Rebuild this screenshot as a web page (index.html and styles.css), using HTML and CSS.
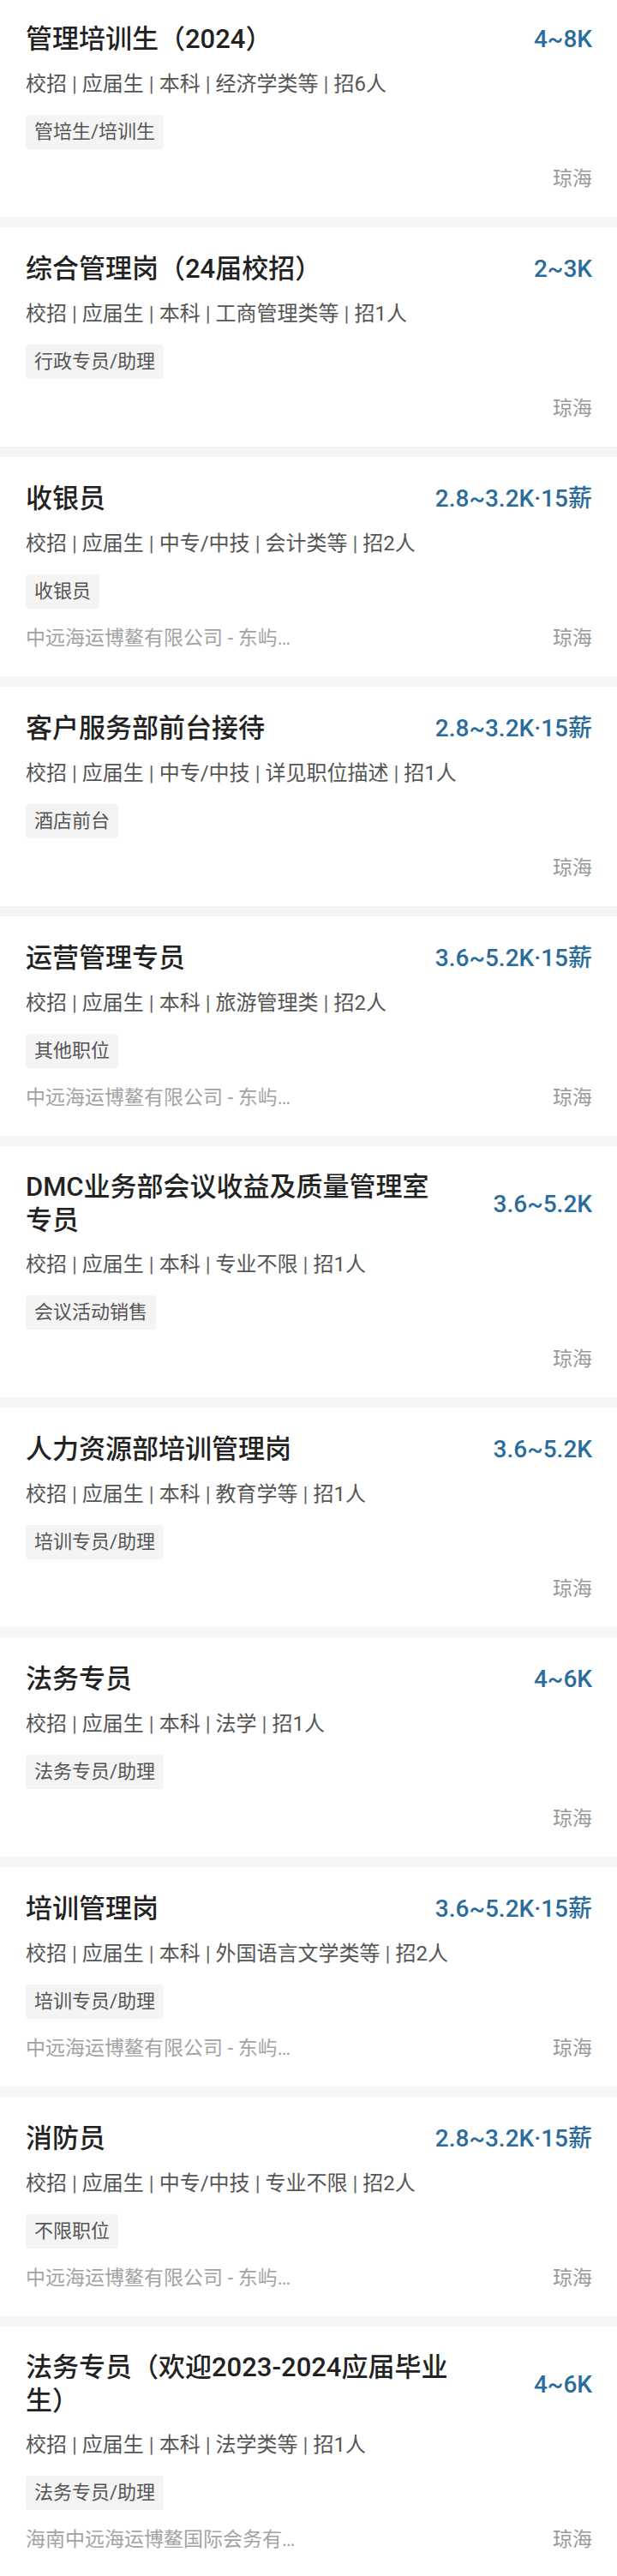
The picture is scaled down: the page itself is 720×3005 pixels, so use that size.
FILE: index.html
```html
<!DOCTYPE html>
<html lang="zh-CN">
<head>
<meta charset="utf-8">
<title>职位列表</title>
<link rel="stylesheet" href="styles.css">
</head>
<body>
<div class="list">
  <div class="card">
    <div class="head"><div class="title">管理培训生（2024）</div><div class="salary">4~8K</div></div>
    <div class="meta">校招<span class="sep">|</span>应届生<span class="sep">|</span>本科<span class="sep">|</span>经济学类等<span class="sep">|</span>招6人</div>
    <div class="tags"><span class="tag">管培生/培训生</span></div>
    <div class="foot"><span class="company"></span><span class="loc">琼海</span></div>
  </div>
  <div class="card">
    <div class="head"><div class="title">综合管理岗（24届校招）</div><div class="salary">2~3K</div></div>
    <div class="meta">校招<span class="sep">|</span>应届生<span class="sep">|</span>本科<span class="sep">|</span>工商管理类等<span class="sep">|</span>招1人</div>
    <div class="tags"><span class="tag">行政专员/助理</span></div>
    <div class="foot"><span class="company"></span><span class="loc">琼海</span></div>
  </div>
  <div class="card">
    <div class="head"><div class="title">收银员</div><div class="salary">2.8~3.2K·15薪</div></div>
    <div class="meta">校招<span class="sep">|</span>应届生<span class="sep">|</span>中专/中技<span class="sep">|</span>会计类等<span class="sep">|</span>招2人</div>
    <div class="tags"><span class="tag">收银员</span></div>
    <div class="foot"><span class="company">中远海运博鳌有限公司 - 东屿岛大酒店</span><span class="loc">琼海</span></div>
  </div>
  <div class="card">
    <div class="head"><div class="title">客户服务部前台接待</div><div class="salary">2.8~3.2K·15薪</div></div>
    <div class="meta">校招<span class="sep">|</span>应届生<span class="sep">|</span>中专/中技<span class="sep">|</span>详见职位描述<span class="sep">|</span>招1人</div>
    <div class="tags"><span class="tag">酒店前台</span></div>
    <div class="foot"><span class="company"></span><span class="loc">琼海</span></div>
  </div>
  <div class="card">
    <div class="head"><div class="title">运营管理专员</div><div class="salary">3.6~5.2K·15薪</div></div>
    <div class="meta">校招<span class="sep">|</span>应届生<span class="sep">|</span>本科<span class="sep">|</span>旅游管理类<span class="sep">|</span>招2人</div>
    <div class="tags"><span class="tag">其他职位</span></div>
    <div class="foot"><span class="company">中远海运博鳌有限公司 - 东屿岛大酒店</span><span class="loc">琼海</span></div>
  </div>
  <div class="card">
    <div class="head"><div class="title">DMC业务部会议收益及质量管理室专员</div><div class="salary">3.6~5.2K</div></div>
    <div class="meta">校招<span class="sep">|</span>应届生<span class="sep">|</span>本科<span class="sep">|</span>专业不限<span class="sep">|</span>招1人</div>
    <div class="tags"><span class="tag">会议活动销售</span></div>
    <div class="foot"><span class="company"></span><span class="loc">琼海</span></div>
  </div>
  <div class="card">
    <div class="head"><div class="title">人力资源部培训管理岗</div><div class="salary">3.6~5.2K</div></div>
    <div class="meta">校招<span class="sep">|</span>应届生<span class="sep">|</span>本科<span class="sep">|</span>教育学等<span class="sep">|</span>招1人</div>
    <div class="tags"><span class="tag">培训专员/助理</span></div>
    <div class="foot"><span class="company"></span><span class="loc">琼海</span></div>
  </div>
  <div class="card">
    <div class="head"><div class="title">法务专员</div><div class="salary">4~6K</div></div>
    <div class="meta">校招<span class="sep">|</span>应届生<span class="sep">|</span>本科<span class="sep">|</span>法学<span class="sep">|</span>招1人</div>
    <div class="tags"><span class="tag">法务专员/助理</span></div>
    <div class="foot"><span class="company"></span><span class="loc">琼海</span></div>
  </div>
  <div class="card">
    <div class="head"><div class="title">培训管理岗</div><div class="salary">3.6~5.2K·15薪</div></div>
    <div class="meta">校招<span class="sep">|</span>应届生<span class="sep">|</span>本科<span class="sep">|</span>外国语言文学类等<span class="sep">|</span>招2人</div>
    <div class="tags"><span class="tag">培训专员/助理</span></div>
    <div class="foot"><span class="company">中远海运博鳌有限公司 - 东屿岛大酒店</span><span class="loc">琼海</span></div>
  </div>
  <div class="card">
    <div class="head"><div class="title">消防员</div><div class="salary">2.8~3.2K·15薪</div></div>
    <div class="meta">校招<span class="sep">|</span>应届生<span class="sep">|</span>中专/中技<span class="sep">|</span>专业不限<span class="sep">|</span>招2人</div>
    <div class="tags"><span class="tag">不限职位</span></div>
    <div class="foot"><span class="company">中远海运博鳌有限公司 - 东屿岛大酒店</span><span class="loc">琼海</span></div>
  </div>
  <div class="card">
    <div class="head"><div class="title">法务专员（欢迎2023-2024应届毕业生）</div><div class="salary">4~6K</div></div>
    <div class="meta">校招<span class="sep">|</span>应届生<span class="sep">|</span>本科<span class="sep">|</span>法学类等<span class="sep">|</span>招1人</div>
    <div class="tags"><span class="tag">法务专员/助理</span></div>
    <div class="foot"><span class="company">海南中远海运博鳌国际会务有限公司</span><span class="loc">琼海</span></div>
  </div>
</div>
</body>
</html>
```
FILE: styles.css
```css
html, body {
  margin: 0;
  padding: 0;
  background: #f5f5f7;
}
body {
  font-family: Roboto, "Noto Sans CJK SC", "Noto Sans", sans-serif;
  color: #222;
}
.list {
  display: flex;
  flex-direction: column;
  gap: 12px;
  margin-top: -3px;
}
.card {
  background: #fff;
  padding: 28px 29px 28px 30px;
}
.head {
  display: flex;
  align-items: center;
  justify-content: space-between;
  min-height: 41px;
}
.title {
  font-size: 31px;
  line-height: 39px;
  font-weight: 500;
  color: #222;
  max-width: 495px;
}
.salary {
  font-size: 28px;
  line-height: 41px;
  font-weight: 500;
  color: #2a6c9c;
  white-space: nowrap;
  flex-shrink: 0;
}
.meta {
  margin-top: 15px;
  font-size: 24px;
  line-height: 34px;
  color: #555;
}
.sep {
  margin: 0 6px;
  color: #666;
}
.tags {
  margin-top: 19px;
  display: flex;
}
.tag {
  display: inline-block;
  height: 40px;
  line-height: 40px;
  padding: 0 10px;
  font-size: 22px;
  color: #555;
  background: #f4f4f4;
  border-radius: 4px;
}
.foot {
  margin-top: 19px;
  display: flex;
  justify-content: space-between;
  align-items: center;
  height: 32px;
  font-size: 23px;
  line-height: 32px;
  color: #999;
}
.company {
  max-width: 325px;
  white-space: nowrap;
  overflow: hidden;
  text-overflow: ellipsis;
  color: #a3a3a3;
}
.loc {
  margin-left: auto;
  color: #999;
}
```
